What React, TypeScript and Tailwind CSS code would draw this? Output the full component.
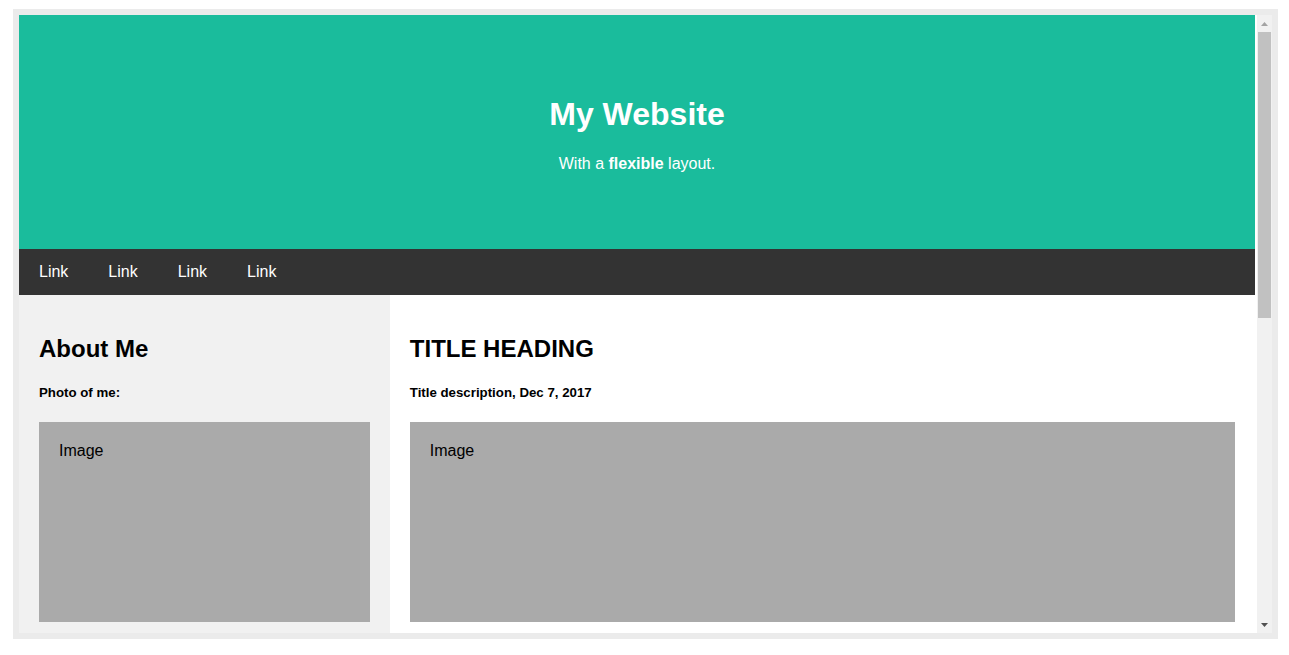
export default function App() {
  const links = ["Link", "Link", "Link", "Link"];

  return (
    <div className="min-h-screen bg-white pt-[9px] pl-[13px] font-['Liberation_Sans',Arial,sans-serif]">
      {/* Framed page with its own scrollbar */}
      <div className="flex h-[630px] w-[1265px] border-[6px] border-[#ebebeb]">
        <div className="flex-1 overflow-hidden bg-white">
          {/* Header */}
          <div className="bg-[#1abc9c] px-20 py-[60px] text-center text-white">
            <h1 className="my-[21.44px] text-[32px] font-bold leading-[37px]">My Website</h1>
            <p className="mb-4 text-base leading-[18.4px]">
              With a <b>flexible</b> layout.
            </p>
          </div>

          {/* Navbar */}
          <div className="flex bg-[#333]">
            {links.map((l, i) => (
              <a key={i} className="px-5 py-[14px] text-base leading-[18px] text-white">
                {l}
              </a>
            ))}
          </div>

          {/* Content */}
          <div className="flex">
            <div className="w-[30%] bg-[#f1f1f1] p-5">
              <h2 className="mt-[19.92px] text-2xl font-bold leading-[27.6px] text-black">About Me</h2>
              <h5 className="my-[22.18px] text-[13.28px] font-bold leading-[15.3px] text-black">Photo of me:</h5>
              <div className="h-[200px] bg-[#aaa] p-5 text-base leading-[18px] text-black">Image</div>
            </div>
            <div className="w-[70%] bg-white p-5">
              <h2 className="mt-[19.92px] text-2xl font-bold leading-[27.6px] text-black">TITLE HEADING</h2>
              <h5 className="my-[22.18px] text-[13.28px] font-bold leading-[15.3px] text-black">
                Title description, Dec 7, 2017
              </h5>
              <div className="h-[200px] bg-[#aaa] p-5 text-base leading-[18px] text-black">Image</div>
            </div>
          </div>
        </div>

        {/* Scrollbar */}
        <div className="flex w-[17px] flex-col border-l-2 border-white bg-[#f1f1f1]">
          <div className="flex h-[17px] items-center justify-center">
            <svg width="7" height="4" viewBox="0 0 7 4">
              <path d="M3.5 0L7 4H0z" fill="#a3a3a3" />
            </svg>
          </div>
          <div className="mx-px h-[286px] bg-[#c1c1c1]" />
          <div className="flex-1" />
          <div className="flex h-[17px] items-center justify-center">
            <svg width="7" height="4" viewBox="0 0 7 4">
              <path d="M0 0H7L3.5 4z" fill="#505050" />
            </svg>
          </div>
        </div>
      </div>
    </div>
  );
}
